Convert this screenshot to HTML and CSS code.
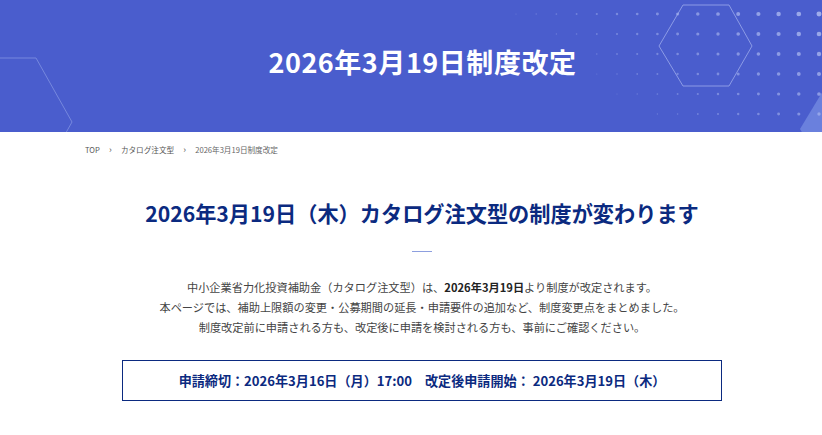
FILE: index.html
```html
<!DOCTYPE html>
<html lang="ja">
<head>
  <meta charset="UTF-8" />
  <title>2026年3月19日制度改定</title>
  <link rel="stylesheet" href="styles.css">
</head>
<body>

  <header class="hero">
    <svg class="hero-deco" width="822" height="132" viewBox="0 0 822 132">
      <!-- 左の六角形 -->
      <polygon class="hex hex-left" points="-36,58 36,58 72,122 36,186 -36,186 -72,122" />
      <!-- 右の六角形 -->
      <polygon class="hex hex-right" points="683,5 729,5 752,46 729,86 683,86 659,46" />
      <!-- 右下の塗り -->
      <polygon class="hex-fill" points="826,86 800,129 826,172" />
      <g id="dots"></g>
    </svg>
    <h1 class="hero-title">2026年3月19日制度改定</h1>
  </header>

  <nav class="breadcrumb">
    <a href="#">TOP</a>
    <span class="sep">›</span>
    <a href="#">カタログ注文型</a>
    <span class="sep">›</span>
    <span class="current">2026年3月19日制度改定</span>
  </nav>

  <main class="content">
    <h2 class="heading">2026年3月19日（木）カタログ注文型の制度が変わります</h2>
    <div class="heading-line"></div>

    <p class="lead">
      中小企業省力化投資補助金（カタログ注文型）は、<strong>2026年3月19日</strong>より制度が改定されます。<br>
      本ページでは、補助上限額の変更・公募期間の延長・申請要件の追加など、制度変更点をまとめました。<br>
      制度改定前に申請される方も、改定後に申請を検討される方も、事前にご確認ください。
    </p>

    <div class="date-box">申請締切：2026年3月16日（月）17:00　改定後申請開始： 2026年3月19日（木）</div>
  </main>

  <script>
    // ヘッダー右上のドット模様
    const dots = document.getElementById("dots");
    const ns = "http://www.w3.org/2000/svg";
    for (let j = 0; j < 6; j++) {
      for (let i = 0; i < 16; i++) {
        const x = 516 + i * 20.2;
        const y = 14 + j * 20;
        const t = (x - 500) / 320 - j * 0.08;
        if (t < 0.04 || (j >= 2 && x < 570 + j * 8)) continue;
        const c = document.createElementNS(ns, "circle");
        c.setAttribute("cx", x.toFixed(1));
        c.setAttribute("cy", y);
        c.setAttribute("r", (0.5 + 2 * t).toFixed(2));
        c.setAttribute("fill", "#b4c0f2");
        c.setAttribute("opacity", (0.25 + 0.55 * t).toFixed(2));
        dots.appendChild(c);
      }
    }
  </script>

</body>
</html>
```

FILE: styles.css
```css
body {
  margin: 0;
  font-family: "Noto Sans CJK JP", "Noto Sans", sans-serif;
  color: #333;
  background: #fff;
}
.hero {
  position: relative;
  height: 132px;
  background: #4a5dcd;
  display: flex;
  align-items: center;
  justify-content: center;
  padding-left: 23px;
  box-sizing: border-box;
  overflow: hidden;
}
.hero-deco {
  position: absolute;
  top: 0;
  left: 0;
}
.hex {
  fill: none;
  stroke-width: 1;
}
.hex-left {
  stroke: #7688de;
}
.hex-right {
  stroke: #8c9be6;
}
.hex-fill {
  fill: #6a80dd;
}
.hero-title {
  position: relative;
  margin: 0 0 10px;
  color: #fff;
  font-size: 27px;
  font-weight: 700;
  letter-spacing: 0.02em;
}
.breadcrumb {
  padding: 142px 0 0 85px;
  margin-top: -132px;
  font-size: 7.6px;
  line-height: 16px;
  color: #555;
}
.breadcrumb a {
  color: #555;
  text-decoration: none;
}
.breadcrumb .sep {
  margin: 0 7.5px;
  font-size: 9px;
}
.breadcrumb .current {
  color: #666;
}
.content {
  width: 600px;
  margin: 0 auto;
  position: relative;
  left: 11px;
  text-align: center;
}
.heading {
  margin: 40px 0 0;
  font-size: 21.2px;
  line-height: 30px;
  font-weight: 700;
  color: #0b2a80;
  white-space: nowrap;
}
.heading-line {
  width: 20px;
  height: 1px;
  background: #8d9fdf;
  margin: 23px auto 0;
}
.lead {
  margin: 25px -40px 0;
  font-size: 11.2px;
  line-height: 20px;
  color: #444;
}
.lead strong {
  color: #222;
}
.date-box {
  margin-top: 23px;
  border: 1px solid #0b2a80;
  line-height: 39px;
  font-size: 13.1px;
  font-weight: 700;
  color: #0b2a80;
  white-space: nowrap;
}
```
